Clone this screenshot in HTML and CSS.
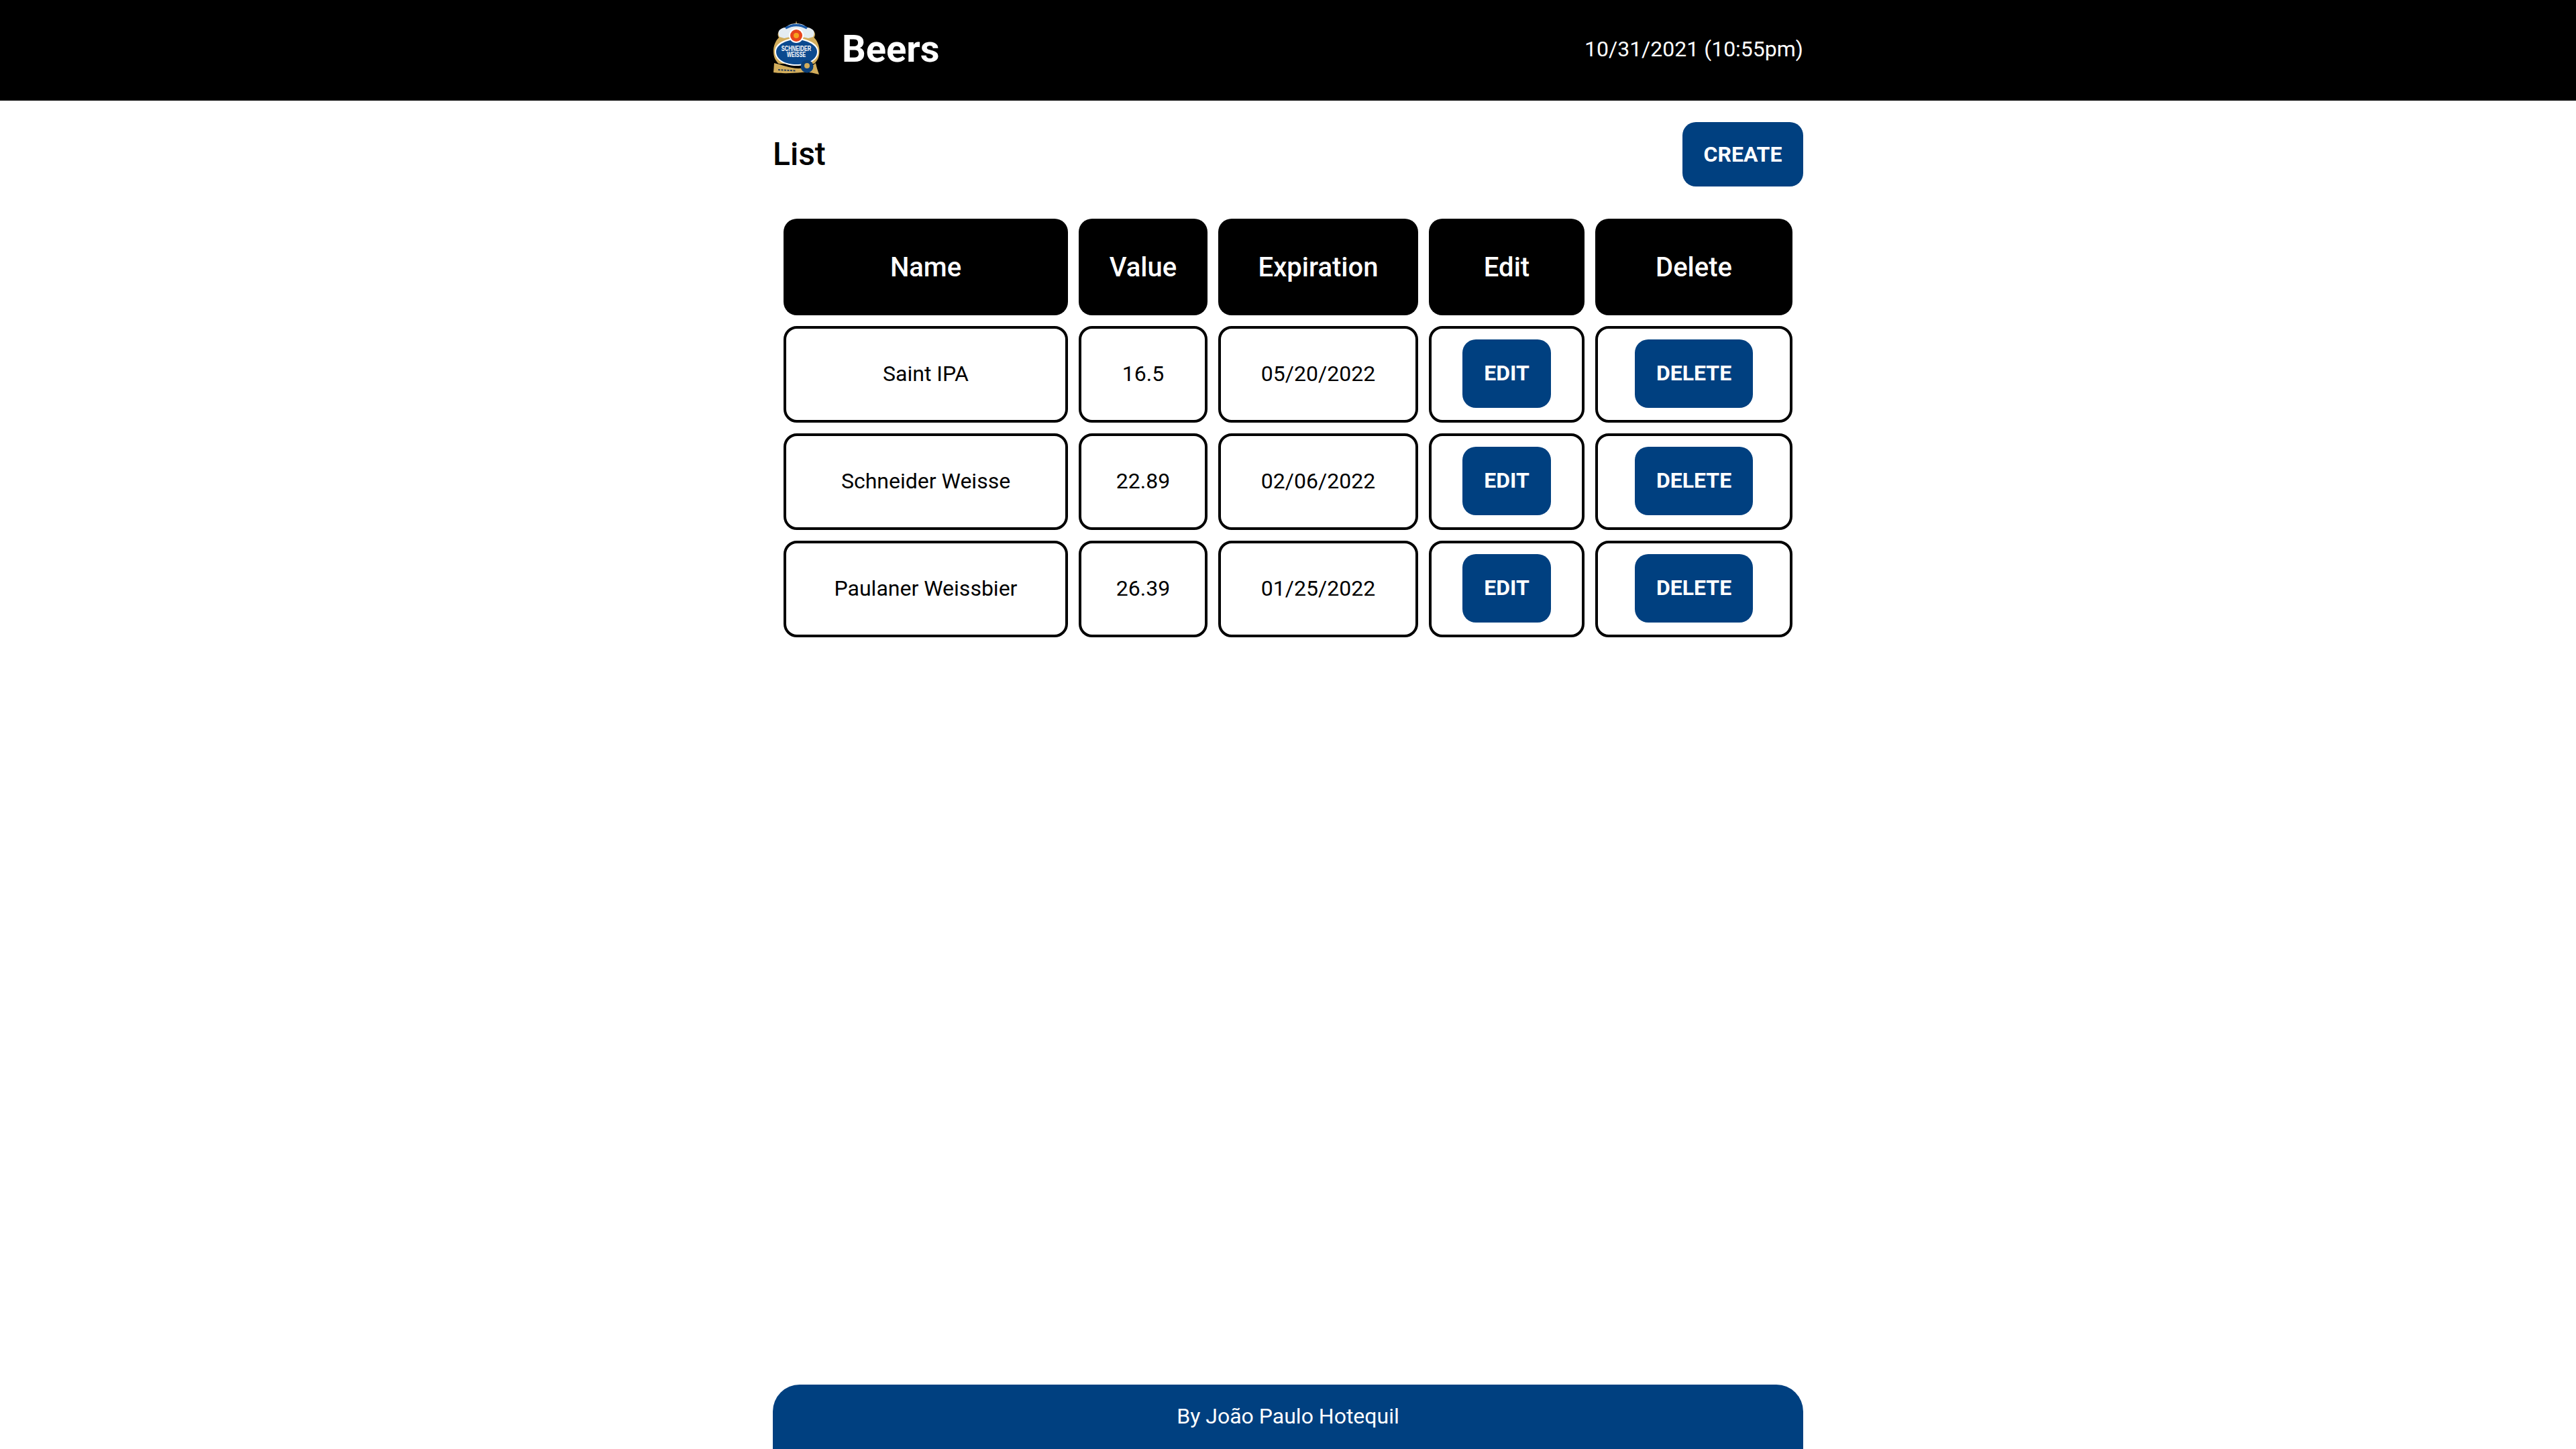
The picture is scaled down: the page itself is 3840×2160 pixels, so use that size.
FILE: index.html
```html
<!DOCTYPE html>
<html lang="en">
<head>
  <meta charset="UTF-8">
  <title>Beers</title>
  <link rel="stylesheet" href="styles.css">
</head>
<body>
  <header class="topbar">
    <div class="topbar-inner">
      <div class="brand">
        <svg class="logo" viewBox="0 0 75 86" aria-label="Schneider Weisse">
          <path d="M37 3l1.5 6c6 0 11 2 15 5 4 0 8 2 10 5 2 3 2 6 0 9 5 5 8 12 8 20 0 9-3 15-8 19H11C6 63 3 57 3 48c0-8 3-15 8-20-2-3-2-6 0-9 2-3 6-5 10-5 4-3 9-5 14.500-5z" fill="#d2ad5c"/>
          <path d="M37 7c-7 0-12 2-16 6-4 0-8 2-10 5-1 3-1 6 1 9l7 2 18-4 18 4 7-2c2-3 2-6 1-9-2-3-6-5-10-5-4-4-9-6-16-6z" fill="#e4ecf2"/>
          <path d="M21 14Q37 5 53 14" stroke="#1c5aa6" stroke-width="3.500" fill="none"/>
          <path d="M37 29C22 29 5 36 5 49c0 13 15 21 32 21s33-8 33-21c0-13-18-20-33-20z" fill="#fff"/>
          <path d="M37 31C24 31 7 38 7 49c0 12 14 19 30 19s31-7 31-19c0-11-18-18-31-18z" fill="#0b4a8f"/>
          <circle cx="37" cy="25" r="11" fill="#fff"/>
          <circle cx="37" cy="25" r="9" fill="#e8441c"/>
          <circle cx="37" cy="25" r="4" fill="#f6a21e"/>
          <text class="logo-text" text-anchor="middle" transform="translate(37 48) scale(.72 1)">SCHNEIDER</text>
          <text class="logo-text" text-anchor="middle" transform="translate(37 56.500) scale(.69 1)">WEISSE</text>
          <path d="M4 66c10 2 24 8 36 8 11 0 21-3 26-8 1 6 3 11 5 17-10-3-18-4-26-3-13 1-28 2-42 0z" fill="#d2ad5c"/>
          <circle cx="53" cy="71" r="9.500" fill="#0b3f78"/>
          <circle cx="53" cy="70" r="4" fill="#d2ad5c"/>
          <path d="M10 76l26 1.500" stroke="#27405f" stroke-width="2" stroke-dasharray="3 1.500" fill="none"/>
        </svg>
        <h1 class="brand-title">Beers</h1>
      </div>
      <span class="datetime">10/31/2021 (10:55pm)</span>
    </div>
  </header>

  <main class="content">
    <div class="content-head">
      <h2 class="content-title">List</h2>
      <button class="btn btn-create">CREATE</button>
    </div>

    <table class="beers">
      <thead>
        <tr>
          <th class="col-name">Name</th>
          <th class="col-value">Value</th>
          <th class="col-exp">Expiration</th>
          <th class="col-edit">Edit</th>
          <th class="col-delete">Delete</th>
        </tr>
      </thead>
      <tbody>
        <tr>
          <td>Saint IPA</td>
          <td>16.5</td>
          <td>05/20/2022</td>
          <td><button class="btn btn-row">EDIT</button></td>
          <td><button class="btn btn-row">DELETE</button></td>
        </tr>
        <tr>
          <td>Schneider Weisse</td>
          <td>22.89</td>
          <td>02/06/2022</td>
          <td><button class="btn btn-row">EDIT</button></td>
          <td><button class="btn btn-row">DELETE</button></td>
        </tr>
        <tr>
          <td>Paulaner Weissbier</td>
          <td>26.39</td>
          <td>01/25/2022</td>
          <td><button class="btn btn-row">EDIT</button></td>
          <td><button class="btn btn-row">DELETE</button></td>
        </tr>
      </tbody>
    </table>
  </main>

  <footer class="footer">By João Paulo Hotequil</footer>
</body>
</html>
```

FILE: styles.css
```css
* {
  box-sizing: border-box;
}
body {
  margin: 0;
  min-height: 100vh;
  display: flex;
  flex-direction: column;
  align-items: center;
  font-family: Roboto, sans-serif;
  background: #fff;
  color: #000;
}
.topbar {
  width: 100%;
  height: 150px;
  background: #000;
  color: #fff;
  display: flex;
  justify-content: center;
}
.topbar-inner {
  width: 1536px;
  padding-bottom: 4px;
  display: flex;
  align-items: center;
  justify-content: space-between;
}
.brand {
  display: flex;
  align-items: center;
  gap: 30px;
}
.logo {
  width: 75px;
  height: 86px;
  margin: 0 0 4px -2px;
}
.logo-text {
  font-family: "Liberation Sans", sans-serif;
  font-weight: 700;
  font-size: 10.500px;
  fill: #fff;
}
.brand-title {
  margin: 0;
  font-size: 56px;
  font-weight: 700;
}
.datetime {
  font-size: 32px;
}
.content {
  width: 1536px;
  flex: 1;
}
.content-head {
  display: flex;
  align-items: center;
  justify-content: space-between;
  padding: 32px 0;
}
.content-title {
  margin: 0 0 2px;
  font-size: 48px;
  font-weight: 500;
}
.btn {
  border: none;
  padding-bottom: 2px;
  background: #004080;
  color: #fff;
  font-family: inherit;
  font-weight: 700;
  font-size: 32px;
  border-radius: 20px;
}
.btn-create {
  width: 180px;
  height: 96px;
}
.btn-row {
  height: 102px;
  padding: 0 32px 2px;
}
.beers {
  width: 1536px;
  table-layout: fixed;
  border-collapse: separate;
  border-spacing: 16px;
}
.beers th {
  height: 144px;
  background: #000;
  color: #fff;
  font-size: 40px;
  font-weight: 500;
  border-radius: 20px;
}
.beers td {
  height: 144px;
  padding: 0 0 2px;
  border: 4px solid #000;
  border-radius: 20px;
  font-size: 32px;
  text-align: center;
}
.col-name { width: 424px; }
.col-value { width: 192px; }
.col-exp { width: 298px; }
.col-edit { width: 232px; }
.col-delete { width: 294px; }
.footer {
  width: 1536px;
  height: 96px;
  padding-bottom: 2px;
  background: #004080;
  color: #fff;
  font-size: 32px;
  border-radius: 40px 40px 0 0;
  display: flex;
  align-items: center;
  justify-content: center;
}
```
